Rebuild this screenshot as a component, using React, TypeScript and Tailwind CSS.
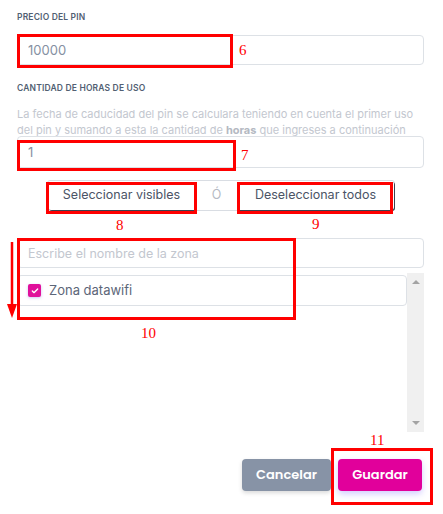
import { Check } from 'lucide-react'

const font = { fontFamily: 'Poppins, Inter, "Noto Sans", sans-serif' }

function RedBox({ className }: { className: string }) {
  return <div className={`pointer-events-none absolute border-[3px] border-[#ff0000] ${className}`} />
}

function Num({ className, children }: { className: string; children: React.ReactNode }) {
  return (
    <span className={`pointer-events-none absolute font-['Liberation_Serif',serif] text-[15px] leading-none text-[#ff0000] ${className}`}>
      {children}
    </span>
  )
}

export default function App() {
  return (
    <div className="relative h-[514px] w-[443px] overflow-hidden bg-white font-['Inter',sans-serif]">
      <div className="flex flex-col pl-[17px] pr-[19px] pt-[12px]">
        <label className="text-[8.5px] font-semibold uppercase leading-[11px] tracking-[0.02em] text-[#525f73]">Precio del pin</label>
        <input
          readOnly
          value="10000"
          className="mt-[12px] h-[30px] rounded-[4px] border border-[#dde1e6] px-[10px] text-[13px] text-[#8590a2] outline-none"
        />

        <label className="mt-[18px] text-[8.5px] font-semibold uppercase leading-[11px] tracking-[0.02em] text-[#525f73]">
          Cantidad de horas de uso
        </label>
        <p className="mt-[12px] whitespace-nowrap text-[11px] leading-[16px] text-[#c3c7cf]">
          La fecha de caducidad del pin se calculara teniendo en cuenta el primer uso
          <br />
          del pin y sumando a esta la cantidad de <b className="font-bold text-[#b4b9c2]">horas</b> que ingreses a continuación
        </p>
        <input
          readOnly
          value="1"
          className="mt-[-2px] h-[32px] rounded-[4px] border border-[#dde1e6] px-[10px] text-[13px] text-[#8590a2] outline-none"
        />

        <div className="mt-[12px] flex justify-center">
          <div className="flex h-[31px] items-stretch rounded-[3px] border border-[#d9dde3] text-[12.5px] text-[#4b5466]">
            <button className="w-[148px] rounded-l-[3px] shadow-[1px_1px_0_#3b4250]">Seleccionar visibles</button>
            <span className="flex w-[42px] items-center justify-center text-[#b5bac3]">Ó</span>
            <button className="w-[156px] rounded-r-[3px] shadow-[1px_1px_0_#3b4250]">Deseleccionar todos</button>
          </div>
        </div>

        <input
          readOnly
          placeholder="Escribe el nombre de la zona"
          className="mt-[27px] h-[30px] rounded-[4px] border border-[#dde1e6] px-[10px] text-[12.5px] outline-none placeholder:text-[#c3c7cf]"
        />

        <div className="mt-[5px] flex h-[159px]">
          <div className="flex-1 pt-[2px]">
            <div className="flex h-[31px] items-center gap-[8px] rounded-[4px] border border-[#dde1e6] px-[10px]">
              <span className="flex h-[13px] w-[13px] items-center justify-center rounded-[2px] bg-[#e0109b] shadow-[0_1px_3px_rgba(120,80,220,0.35)]">
                <Check className="h-[8px] w-[8px] text-white" strokeWidth={4} />
              </span>
              <span className="text-[13px] text-[#5c6678]">Zona datawifi</span>
            </div>
          </div>
          <div className="flex w-[17px] flex-col items-center justify-between bg-[#f0f0f0] py-[7px]">
            <span className="h-0 w-0 border-x-[4px] border-b-[4px] border-x-transparent border-b-[#a3a3a3]" />
            <span className="h-0 w-0 border-x-[4px] border-t-[4px] border-x-transparent border-t-[#a3a3a3]" />
          </div>
        </div>

        <div className="mt-[27px] flex justify-end gap-[7px] pr-[2px]" style={font}>
          <button className="h-[32px] w-[89px] rounded-[4px] bg-[#8793a6] text-[13px] font-semibold text-white shadow-[0_2px_4px_rgba(0,0,0,0.15)]">
            Cancelar
          </button>
          <button className="h-[32px] w-[84px] rounded-[4px] bg-[#e1009b] text-[13px] font-semibold text-white shadow-[0_3px_6px_rgba(110,90,255,0.3)]">
            Guardar
          </button>
        </div>
      </div>

      {/* annotations */}
      <RedBox className="left-[17px] top-[34px] h-[34px] w-[216px]" />
      <Num className="left-[239px] top-[43px]">6</Num>
      <RedBox className="left-[17px] top-[140px] h-[31px] w-[219px]" />
      <Num className="left-[241px] top-[148px]">7</Num>
      <RedBox className="left-[46px] top-[182px] h-[32px] w-[151px]" />
      <Num className="left-[116px] top-[218px]">8</Num>
      <RedBox className="left-[237px] top-[182px] h-[32px] w-[156px]" />
      <Num className="left-[312px] top-[217px]">9</Num>
      <RedBox className="left-[17px] top-[238px] h-[82px] w-[279px]" />
      <Num className="left-[141px] top-[326px]">10</Num>
      <RedBox className="left-[331px] top-[448px] h-[57px] w-[102px]" />
      <Num className="left-[370px] top-[433px]">11</Num>
      <svg className="pointer-events-none absolute left-[6px] top-[242px]" width="12" height="77" viewBox="0 0 12 77">
        <line x1="6" y1="0" x2="6" y2="66" stroke="#ff0000" strokeWidth="2.5" />
        <polygon points="1,62 11,62 6,76" fill="#ff0000" />
      </svg>
    </div>
  )
}
